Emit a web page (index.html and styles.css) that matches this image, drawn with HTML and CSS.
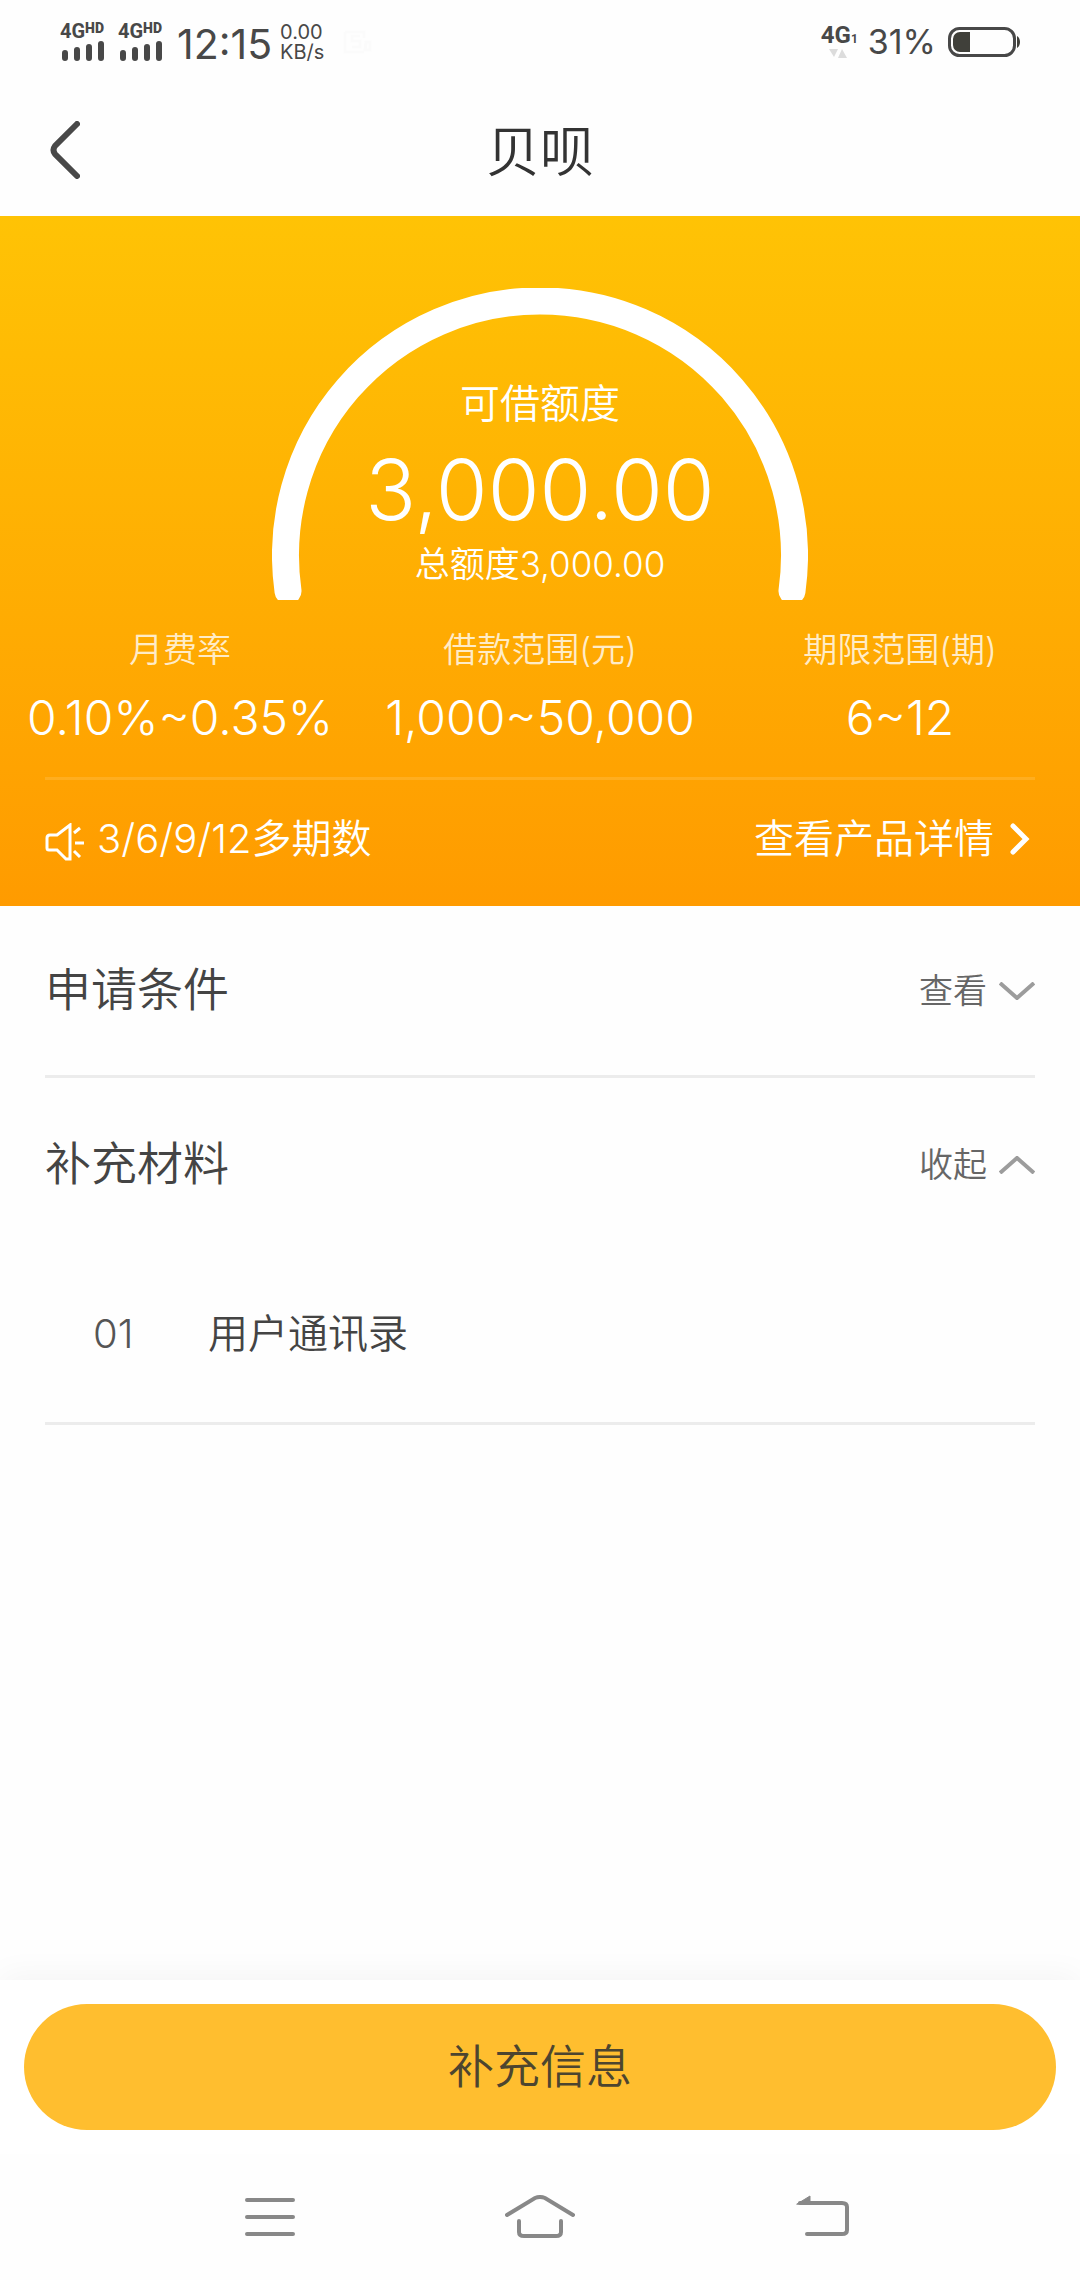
FILE: index.html
```html
<!DOCTYPE html>
<html lang="zh-CN">
<head>
  <meta charset="UTF-8">
  <meta name="viewport" content="width=device-width, initial-scale=1.0">
  <title>贝呗</title>
  <link rel="stylesheet" href="styles.css">
</head>
<body>
  <div class="status-bar">
    <div class="status-left">
      <div class="signal">
        <div class="signal-type">4G<sup>HD</sup></div>
        <svg width="42" height="20" viewBox="0 0 42 20"><path d="M3 12v5M15 9v8M27 6v11M39 3v14"/></svg>
      </div>
      <div class="signal">
        <div class="signal-type">4G<sup>HD</sup></div>
        <svg width="42" height="20" viewBox="0 0 42 20"><path d="M3 12v5M15 9v8M27 6v11M39 3v14"/></svg>
      </div>
      <span class="clock">12:15</span>
      <div class="speed"><span>0.00</span><span>KB/s</span></div>
      <svg class="faint-icon" width="30" height="28" viewBox="0 0 30 28"><path d="M3 4v20h19M3 4h19v6M18 8h-8v5h8v6h-8M24 14h4v8h-5z"/></svg>
    </div>
    <div class="status-right">
      <div class="network">
        <div class="signal-type">4G<sub>1</sub></div>
        <svg width="18" height="9" viewBox="0 0 18 9"><path d="M0 0h9L5 8zM9 9h9L13 0z"/></svg>
      </div>
      <span class="battery-level">31%</span>
      <svg class="battery" width="72" height="30" viewBox="0 0 72 30">
        <rect x="1.5" y="1.5" width="65" height="27" rx="10" fill="none" stroke="#484848" stroke-width="3"/>
        <path d="M22 5v20H12a7 7 0 0 1-7-7v-6a7 7 0 0 1 7-7zM69 9c4 2 4 10 0 12z" fill="#40403a"/>
      </svg>
    </div>
  </div>

  <header class="header">
    <button class="back-button" aria-label="返回">
      <svg width="30" height="58" viewBox="0 0 30 58"><path d="M27 3 5 25q-3 4 0 8l22 22"/></svg>
    </button>
    <h1>贝呗</h1>
  </header>

  <section class="hero">
    <div class="gauge">
      <svg class="gauge-arc" width="536" height="312" viewBox="0 0 536 312"><path d="M16 303a254.500 254.500 0 1 1 504 0"/></svg>
      <div class="gauge-text">
        <span class="gauge-label">可借额度</span>
        <span class="gauge-amount">3,000.00</span>
        <span class="gauge-total">总额度3,000.00</span>
      </div>
    </div>
    <dl class="stats">
      <div class="stat"><dt>月费率</dt><dd>0.10%~0.35%</dd></div>
      <div class="stat"><dt>借款范围(元)</dt><dd>1,000~50,000</dd></div>
      <div class="stat"><dt>期限范围(期)</dt><dd>6~12</dd></div>
    </dl>
    <div class="notice">
      <svg class="speaker" width="40" height="38" viewBox="0 0 40 38"><path d="M25 2v34h-4l-9-9H4q-2 0-2-2V15q0-3 3-3h7zM29 10l6-5M30 20h9M29 28l6 6"/></svg>
      <span>3/6/9/12多期数</span>
      <a href="#" class="detail-link">查看产品详情
        <svg width="20" height="32" viewBox="0 0 20 32"><path d="m3 3 13 13L3 29"/></svg>
      </a>
    </div>
  </section>

  <main class="content">
    <div class="row">
      <h2>申请条件</h2>
      <button class="toggle">查看
        <svg width="36" height="18" viewBox="0 0 36 18"><path d="m1 1 17 15L35 1"/></svg>
      </button>
    </div>
    <div class="row open">
      <h2>补充材料</h2>
      <button class="toggle">收起
        <svg width="36" height="18" viewBox="0 0 36 18"><path d="M1 17 18 2l17 15"/></svg>
      </button>
    </div>
    <div class="item">
      <span class="item-number">01</span>
      <span>用户通讯录</span>
    </div>
  </main>

  <footer class="action-bar">
    <button class="submit-button">补充信息</button>
  </footer>

  <nav class="nav-bar">
    <button aria-label="菜单">
      <svg width="70" height="44" viewBox="0 0 70 44"><path d="M12 5h46M12 22h46M12 39h46"/></svg>
    </button>
    <button aria-label="主页">
      <svg width="70" height="44" viewBox="0 0 70 44"><path d="M2 20 30 3q5-2 10 0l28 17M14 26v11q0 4 5 4h32q5 0 5-4V26"/></svg>
    </button>
    <button aria-label="返回">
      <svg width="96" height="44" viewBox="-26 0 96 44"><path d="M12 8h42q5 0 5 4v23q0 4-5 4H19"/><path class="solid" d="M9 9 22 1v8z"/></svg>
    </button>
  </nav>
</body>
</html>
```
FILE: styles.css
```css
* {
  box-sizing: border-box;
}
body {
  margin: 0;
  min-height: 100vh;
  display: flex;
  flex-direction: column;
  background: #fefefe;
  color: #444;
  font-family: Inter, "Noto Sans CJK SC", sans-serif;
  font-weight: 350;
}
button {
  padding: 0;
  border: none;
  background: none;
  color: inherit;
  font: inherit;
  cursor: pointer;
}
svg {
  display: block;
  flex: none;
  fill: none;
}
h1,
h2,
dl,
dd {
  margin: 0;
  font-weight: 350;
}

/* status bar */
.status-bar {
  height: 84px;
  padding: 0 60px;
  display: flex;
  justify-content: space-between;
  align-items: center;
  color: #484848;
  font-weight: 400;
}
.status-left,
.status-right {
  display: flex;
  align-items: center;
}
.signal {
  width: 46px;
  margin-right: 12px;
}
.signal svg {
  margin: 0 2px;
  stroke: #484848;
  stroke-width: 6;
  stroke-linecap: round;
}
.signal-type {
  display: flex;
  height: 18px;
  font-family: Roboto, sans-serif;
  font-size: 20px;
  line-height: 16px;
  font-weight: 700;
}
.signal-type sup {
  font-size: 14px;
  line-height: 10px;
  font-weight: 900;
}
.signal-type sub {
  font-size: 12px;
  line-height: 24px;
}
.clock {
  font-size: 41px;
  line-height: 40px;
  margin: 4px 8px 0 1px;
}
.speed {
  display: flex;
  flex-direction: column;
  font-size: 20px;
  line-height: 20px;
}
.faint-icon {
  margin-left: 18px;
  stroke: #fbfbfb;
  stroke-width: 3;
}
.network {
  margin-right: 10px;
}
.network .signal-type {
  font-size: 24px;
}
.network svg {
  margin: 4px 0 0 8px;
  fill: #dcdcdc;
}
.battery-level {
  margin-right: 12px;
  font-size: 34px;
  line-height: 40px;
}

/* title */
.header {
  position: relative;
  height: 132px;
  display: flex;
  justify-content: center;
  align-items: center;
  color: #333;
}
.header h1 {
  padding-top: 6px;
  font-size: 54px;
  line-height: 64px;
}
.back-button {
  position: absolute;
  left: 50px;
}
.back-button svg {
  stroke: #484848;
  stroke-width: 6;
  stroke-linecap: round;
}

/* credit limit */
.hero {
  padding-top: 72px;
  background: linear-gradient(#ffc305, #ff9b00);
  color: #fff;
}
.gauge {
  position: relative;
  width: 536px;
  height: 312px;
  margin: 0 auto;
}
.gauge-arc {
  stroke: #fff;
  stroke-width: 27;
  stroke-linecap: round;
}
.gauge-text {
  position: absolute;
  top: 94px;
  left: 0;
  right: 0;
  display: flex;
  flex-direction: column;
  align-items: center;
}
.gauge-label {
  font-size: 40px;
  line-height: 44px;
}
.gauge-amount {
  font-size: 84px;
  line-height: 128px;
  font-weight: 300;
}
.gauge-total {
  font-size: 35px;
  line-height: 20px;
}
.stats {
  display: grid;
  grid-template-columns: repeat(3, 1fr);
  margin-top: 26px;
  text-align: center;
}
.stat dt {
  font-size: 34px;
  line-height: 48px;
  color: rgba(255, 255, 255, 0.8);
}
.stat dd {
  margin-top: 8px;
  font-size: 48px;
  line-height: 72px;
  font-weight: 300;
}
.notice {
  margin: 23px 45px 0;
  height: 129px;
  display: flex;
  align-items: center;
  border-top: 3px solid rgba(255, 255, 255, 0.12);
  padding-bottom: 8px;
  font-size: 40px;
  line-height: 48px;
}
.speaker {
  margin: 6px 12px 0 0;
  stroke: #fff;
  stroke-width: 3;
}
.detail-link {
  margin-left: auto;
  padding-right: 5px;
  display: flex;
  align-items: center;
  gap: 16px;
  color: #fff;
  text-decoration: none;
}
.detail-link svg {
  stroke: #fff;
  stroke-width: 5;
  stroke-linecap: round;
}

/* sections */
.content {
  flex: 1;
  padding: 0 45px;
}
.row {
  height: 172px;
  padding-bottom: 4px;
  display: flex;
  justify-content: space-between;
  align-items: center;
  border-bottom: 3px solid #ececec;
}
.row.open {
  height: 168px;
  padding: 2px 0 0;
  border: none;
}
.row h2 {
  font-size: 46px;
  line-height: 56px;
}
.toggle {
  padding-top: 4px;
  display: flex;
  align-items: center;
  gap: 12px;
  font-size: 34px;
  line-height: 40px;
  color: #666;
}
.toggle svg {
  stroke: #9c9c9c;
  stroke-width: 4;
}
.item {
  height: 179px;
  padding: 0 48px;
  display: flex;
  align-items: center;
  border-bottom: 3px solid #ececec;
  font-size: 40px;
  line-height: 48px;
}
.item-number {
  width: 115px;
  color: #555;
  font-weight: 300;
}

/* bottom */
.action-bar {
  padding: 24px;
  background: #fff;
  box-shadow: 0 -6px 30px rgba(0, 0, 0, 0.04);
}
.submit-button {
  width: 100%;
  height: 126px;
  padding-bottom: 8px;
  border-radius: 63px;
  background: #ffbe2f;
  color: #4d452f;
  font-size: 46px;
}
.nav-bar {
  height: 126px;
  padding: 0 135px;
  display: grid;
  grid-template-columns: repeat(3, 1fr);
  justify-items: center;
  align-items: center;
  background: #fefefe;
}
.nav-bar svg {
  stroke: #888;
  stroke-width: 4;
  stroke-linecap: round;
}
.nav-bar .solid {
  fill: #888;
  stroke-width: 1;
}
```
